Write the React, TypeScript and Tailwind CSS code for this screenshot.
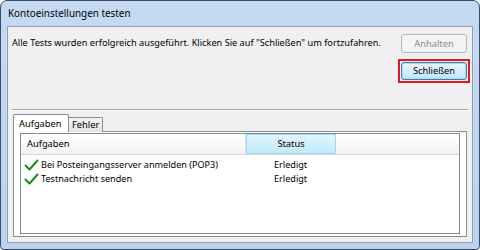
import React from "react";

function Check() {
  return (
    <svg width="15" height="12" viewBox="0 0 15 12" className="shrink-0">
      <path d="M1.5 6.5 L5.5 10.5 L13.5 1.5" fill="none" stroke="#1f8a1f" strokeWidth="2" strokeLinecap="round" strokeLinejoin="round" />
    </svg>
  );
}

export default function App() {
  const font = { fontFamily: '"Noto Sans", "Liberation Sans", Arial, sans-serif' };
  return (
    <div style={font} className="w-[480px] h-[250px] bg-white whitespace-nowrap">
      <div className="w-[480px] h-[250px] flex flex-col rounded-t-[7px] rounded-b-[4px] border border-[#3b4b60] bg-gradient-to-b from-[#c4daf3] to-[#bcd3ef] overflow-hidden">
        <div className="h-[25px] flex items-center pl-[7px] text-[9.9px] text-black">Kontoeinstellungen testen</div>
        <div className="flex-1 mx-[6px] mb-[6px] border border-[#8fa4bd] bg-[#f0f0f0] flex flex-col">
          <div className="flex pt-[6px] pr-[2px]">
            <div className="flex-1 min-w-0 pl-[4px] pt-[3px] text-[9.2px] leading-[14px] text-black">
              Alle Tests wurden erfolgreich ausgeführt. Klicken Sie auf "Schließen" um fortzufahren.
            </div>
            <div className="w-[72px] shrink-0 flex flex-col items-center">
              <div className="mt-[1px] w-[66px] h-[19px] rounded-[3px] border border-[#b6b9bc] bg-[#f4f4f4] flex items-center justify-center text-[9.3px] text-[#8a8a8a]">Anhalten</div>
              <div className="mt-[6px] w-[72px] h-[24px] border-2 border-[#e5161d] p-[1px]">
                <div className="w-full h-full rounded-[3px] border border-[#3c7fb1] bg-gradient-to-b from-[#eaf6fd] to-[#bee6fd] flex items-center justify-center text-[9.3px] text-black shadow-[inset_0_0_0_1px_#a7dcf7]">Schließen</div>
              </div>
            </div>
          </div>
          <div className="mt-[26px] mx-[4px] h-[2px] border-t border-[#a0a0a0] border-b border-b-white" />
          <div className="flex-1 flex flex-col mx-[5px] mt-[3px] mb-[5px]">
            <div className="flex items-end h-[18px] relative z-10">
              <div className="h-[18px] w-[56px] border border-b-0 border-[#898c95] bg-white flex items-center pl-[5px] text-[9.3px] text-black rounded-t-[2px]">Aufgaben</div>
              <div className="h-[15px] w-[34px] border border-l-0 border-b-0 border-[#898c95] bg-gradient-to-b from-[#f3f3f3] to-[#e3e3e3] flex items-center pl-[3px] text-[9.3px] text-black rounded-tr-[2px]">Fehler</div>
            </div>
            <div className="flex-1 -mt-px border border-[#898c95] bg-white pl-[6px] pr-[6px] pt-[1px] pb-[2px] flex">
              <div className="flex-1 border border-[#828790] bg-white flex flex-col">
                <div className="h-[21px] flex bg-gradient-to-b from-white to-[#f2f3f5] border-b border-[#d5d5d5]">
                  <div className="w-[225px] flex items-center pl-[6px] text-[9.3px] text-black border-r border-[#e3e3e3]">Aufgaben</div>
                  <div className="w-[90px] flex items-center justify-center text-[9.3px] text-black border border-[#96d9f9] bg-gradient-to-b from-[#e2f5fd] to-[#c2e9fa]">Status</div>
                  <div className="flex-1" />
                </div>
                <div className="flex flex-col pt-[3px]">
                  <div className="h-[14px] flex items-center text-[9.1px] text-black">
                    <div className="w-[225px] flex items-center pl-[3px] gap-[2px]"><Check /><span>Bei Posteingangsserver anmelden (POP3)</span></div>
                    <div className="pl-[28px]">Erledigt</div>
                  </div>
                  <div className="h-[14px] flex items-center text-[9.1px] text-black">
                    <div className="w-[225px] flex items-center pl-[3px] gap-[2px]"><Check /><span>Testnachricht senden</span></div>
                    <div className="pl-[28px]">Erledigt</div>
                  </div>
                </div>
              </div>
            </div>
          </div>
        </div>
      </div>
    </div>
  );
}
